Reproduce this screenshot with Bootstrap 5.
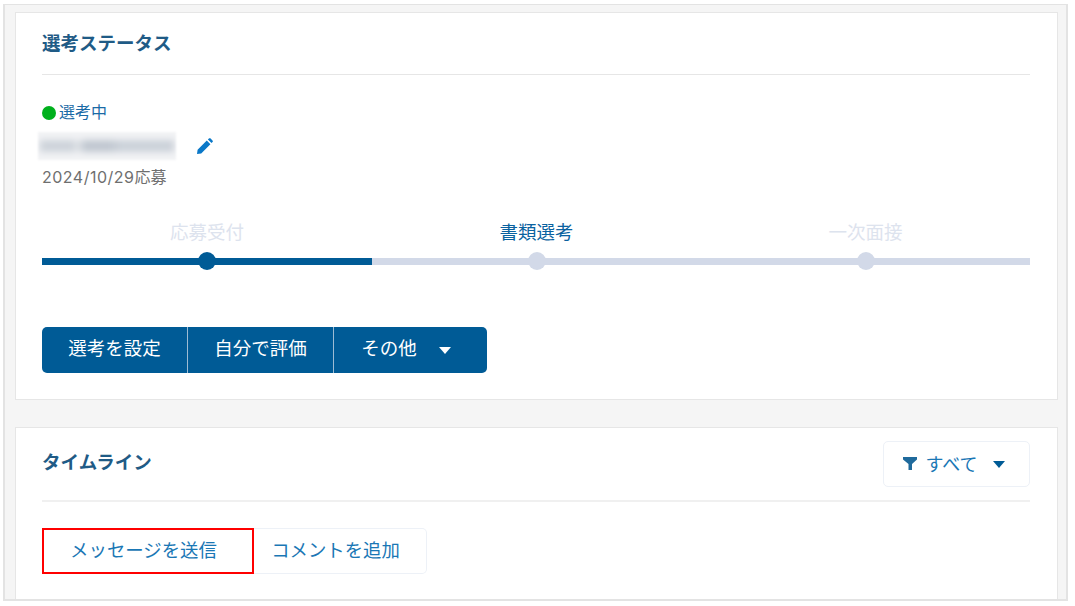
<!DOCTYPE html>
<html lang="ja">
<head>
  <meta charset="UTF-8" />
  <meta name="viewport" content="width=device-width, initial-scale=1.0"/>
  <title>選考ステータス</title>
  <link href="https://cdn.jsdelivr.net/npm/bootstrap@5.3.3/dist/css/bootstrap.min.css" rel="stylesheet"/>
  <style>
    body {
      background: #fff;
      font-family: "Open Sans", "Noto Sans CJK JP", sans-serif;
      color: #005b96;
    }
    .frame {
      margin: 4px 7px 0 3px;
      height: 597px;
      overflow: hidden;
      background: #f5f5f5;
      border: 2px solid #e3e3e3;
      border-top-width: 1px;
      padding: 7px 8px 0 10px;
    }
    .panel {
      background: #fff;
      border: 1px solid #e6e6e6;
      padding: 0 27px 0 26px;
    }
    .panel-status { height: 388px; margin-bottom: 27px; }
    .panel-timeline { height: 200px; }
    .panel-head {
      border-bottom: 1px solid #e6e6e6;
      height: 62px;
    }
    .panel-head-tl {
      border-bottom: 2px solid #f0f0f0;
      height: 74px;
      padding-top: 13px;
    }
    .panel-title {
      font-size: 18.5px;
      font-weight: 700;
      color: #1f5b86;
      margin: 0;
    }
    .panel-head-tl .panel-title { margin-top: 10px; }
    .state-line { font-size: 16px; margin-top: 26px; line-height: 22px; color: #1a6aa6; }
    .state-dot {
      width: 14px;
      height: 14px;
      border-radius: 50%;
      background: #00b01c;
      margin-right: 3px;
      margin-top: 2px;
    }
    .masked-row { margin-top: 9px; }
    .masked {
      width: 138px;
      height: 28px;
      margin-left: -4px;
      background: #f2f3f5;
      filter: blur(1px);
      overflow: hidden;
    }
    .masked-text {
      display: block;
      margin: 8px 2px 0;
      height: 12px;
      background: linear-gradient(90deg, #cdd3da 0 24%, #e1e4e8 28%, #c0c7d0 34% 52%, #cbd1d9 60% 100%);
      filter: blur(3px);
    }
    .pen { margin-left: 20px; }
    .apply-date {
      font-family: "Inter", "Noto Sans CJK JP", sans-serif;
      font-size: 16px;
      color: #6f6f6f;
      line-height: 22px;
      margin-top: 6px;
    }
    .apply-day { letter-spacing: .5px; }
    .steps {
      display: grid;
      grid-template-columns: 330px 329px 329px;
      margin-top: 31px;
    }
    .step-label { font-size: 18.5px; line-height: 26px; color: #dde3ee; }
    .step-current .step-label { color: #0a62a0; }
    .step-bar {
      height: 18px;
      margin-top: 7px;
      background: linear-gradient(#d2d9e8, #d2d9e8) center / 100% 7px no-repeat;
    }
    .step-done .step-bar { background-image: linear-gradient(#005b96, #005b96); }
    .step-dot {
      width: 18px;
      height: 18px;
      border-radius: 50%;
      background: #d2d9e8;
    }
    .step-done .step-dot { background: #005b96; }
    .action-group { margin-top: 57px; }
    .action-group .btn {
      background: #005b96;
      border: 0;
      color: #fff;
      font-size: 18.5px;
      height: 46px;
      width: 146px;
      padding: 0 0 4px;
      border-radius: 0;
      border-right: 1px solid #9dbcd4;
    }
    .action-group .btn:first-child { border-radius: 5px 0 0 5px; }
    .action-group .btn:last-child {
      width: 153px;
      border-right: 0;
      border-radius: 0 5px 5px 0;
      padding-right: 9px;
      gap: 22px;
    }
    .caret-down {
      width: 0;
      height: 0;
      border-left: 6.5px solid transparent;
      border-right: 6.5px solid transparent;
      border-top: 7px solid currentColor;
    }
    .action-group .caret-down { margin-top: 4px; }
    .filter-btn {
      width: 147px;
      height: 46px;
      background: #fff;
      border: 1px solid #edf1f7;
      border-radius: 5px;
      color: #1a77b5;
      font-size: 18px;
      padding: 0 5px 0 0;
    }
    .filter-btn svg { margin-top: -2px; margin-right: 8px; }
    .filter-btn .caret-down { color: #005b96; margin-left: 15px; }
    .tab-row { margin-top: 26px; }
    .tab-btn {
      height: 46px;
      background: #fff;
      color: #1a77b5;
      font-size: 18.4px;
      padding: 0 9px 2px 0;
      border: 1px solid #edf1f7;
      border-radius: 0 5px 5px 0;
      border-left: 0;
      width: 173px;
    }
    .tab-active {
      width: 212px;
      border: 2px solid #f00;
      border-radius: 0;
    }
  </style>
</head>
<body>

  <div class="frame">
    <!-- 選考ステータス -->
    <section class="panel panel-status">
      <div class="panel-head d-flex align-items-center">
        <h2 class="panel-title">選考ステータス</h2>
      </div>

      <div class="state-line d-flex align-items-center">
        <span class="state-dot"></span>選考中
      </div>
      <div class="masked-row d-flex align-items-center">
        <div class="masked"><span class="masked-text"></span></div>
        <svg class="pen" width="17" height="17" viewBox="0 0 17 17">
          <path fill="#0a78c8" d="M1 16l.6-4.200L10.800 2.600l3.600 3.600-9.200 9.200zM11.900 1.500l1-1c.5-.5 1.200-.5 1.700 0l1.900 1.900c.5.5.5 1.200 0 1.700l-1 1z"/>
        </svg>
      </div>
      <div class="apply-date"><span class="apply-day">2024/10/29</span>応募</div>

      <div class="steps">
        <div class="step-done text-center">
          <div class="step-label">応募受付</div>
          <div class="step-bar d-flex justify-content-center"><span class="step-dot"></span></div>
        </div>
        <div class="step-current text-center">
          <div class="step-label">書類選考</div>
          <div class="step-bar d-flex justify-content-center"><span class="step-dot"></span></div>
        </div>
        <div class="text-center">
          <div class="step-label">一次面接</div>
          <div class="step-bar d-flex justify-content-center"><span class="step-dot"></span></div>
        </div>
      </div>

      <div class="action-group d-flex">
        <button type="button" class="btn">選考を設定</button>
        <button type="button" class="btn">自分で評価</button>
        <button type="button" class="btn d-flex align-items-center justify-content-center">その他 <span class="caret-down"></span></button>
      </div>
    </section>

    <!-- タイムライン -->
    <section class="panel panel-timeline">
      <div class="panel-head-tl d-flex justify-content-between align-items-start">
        <h2 class="panel-title">タイムライン</h2>
        <button type="button" class="btn filter-btn d-flex align-items-center justify-content-center">
          <svg width="14" height="14" viewBox="0 0 14 14">
            <path fill="#1f6a9c" d="M0 1h14v2.500L9 8v6H5.500V8L0 3.500z"/>
          </svg>
          すべて
          <span class="caret-down"></span>
        </button>
      </div>
      <div class="tab-row d-flex">
        <button type="button" class="btn tab-btn tab-active">メッセージを送信</button>
        <button type="button" class="btn tab-btn">コメントを追加</button>
      </div>
    </section>
  </div>

  <script src="https://cdn.jsdelivr.net/npm/bootstrap@5.3.3/dist/js/bootstrap.bundle.min.js"></script>
</body>
</html>
